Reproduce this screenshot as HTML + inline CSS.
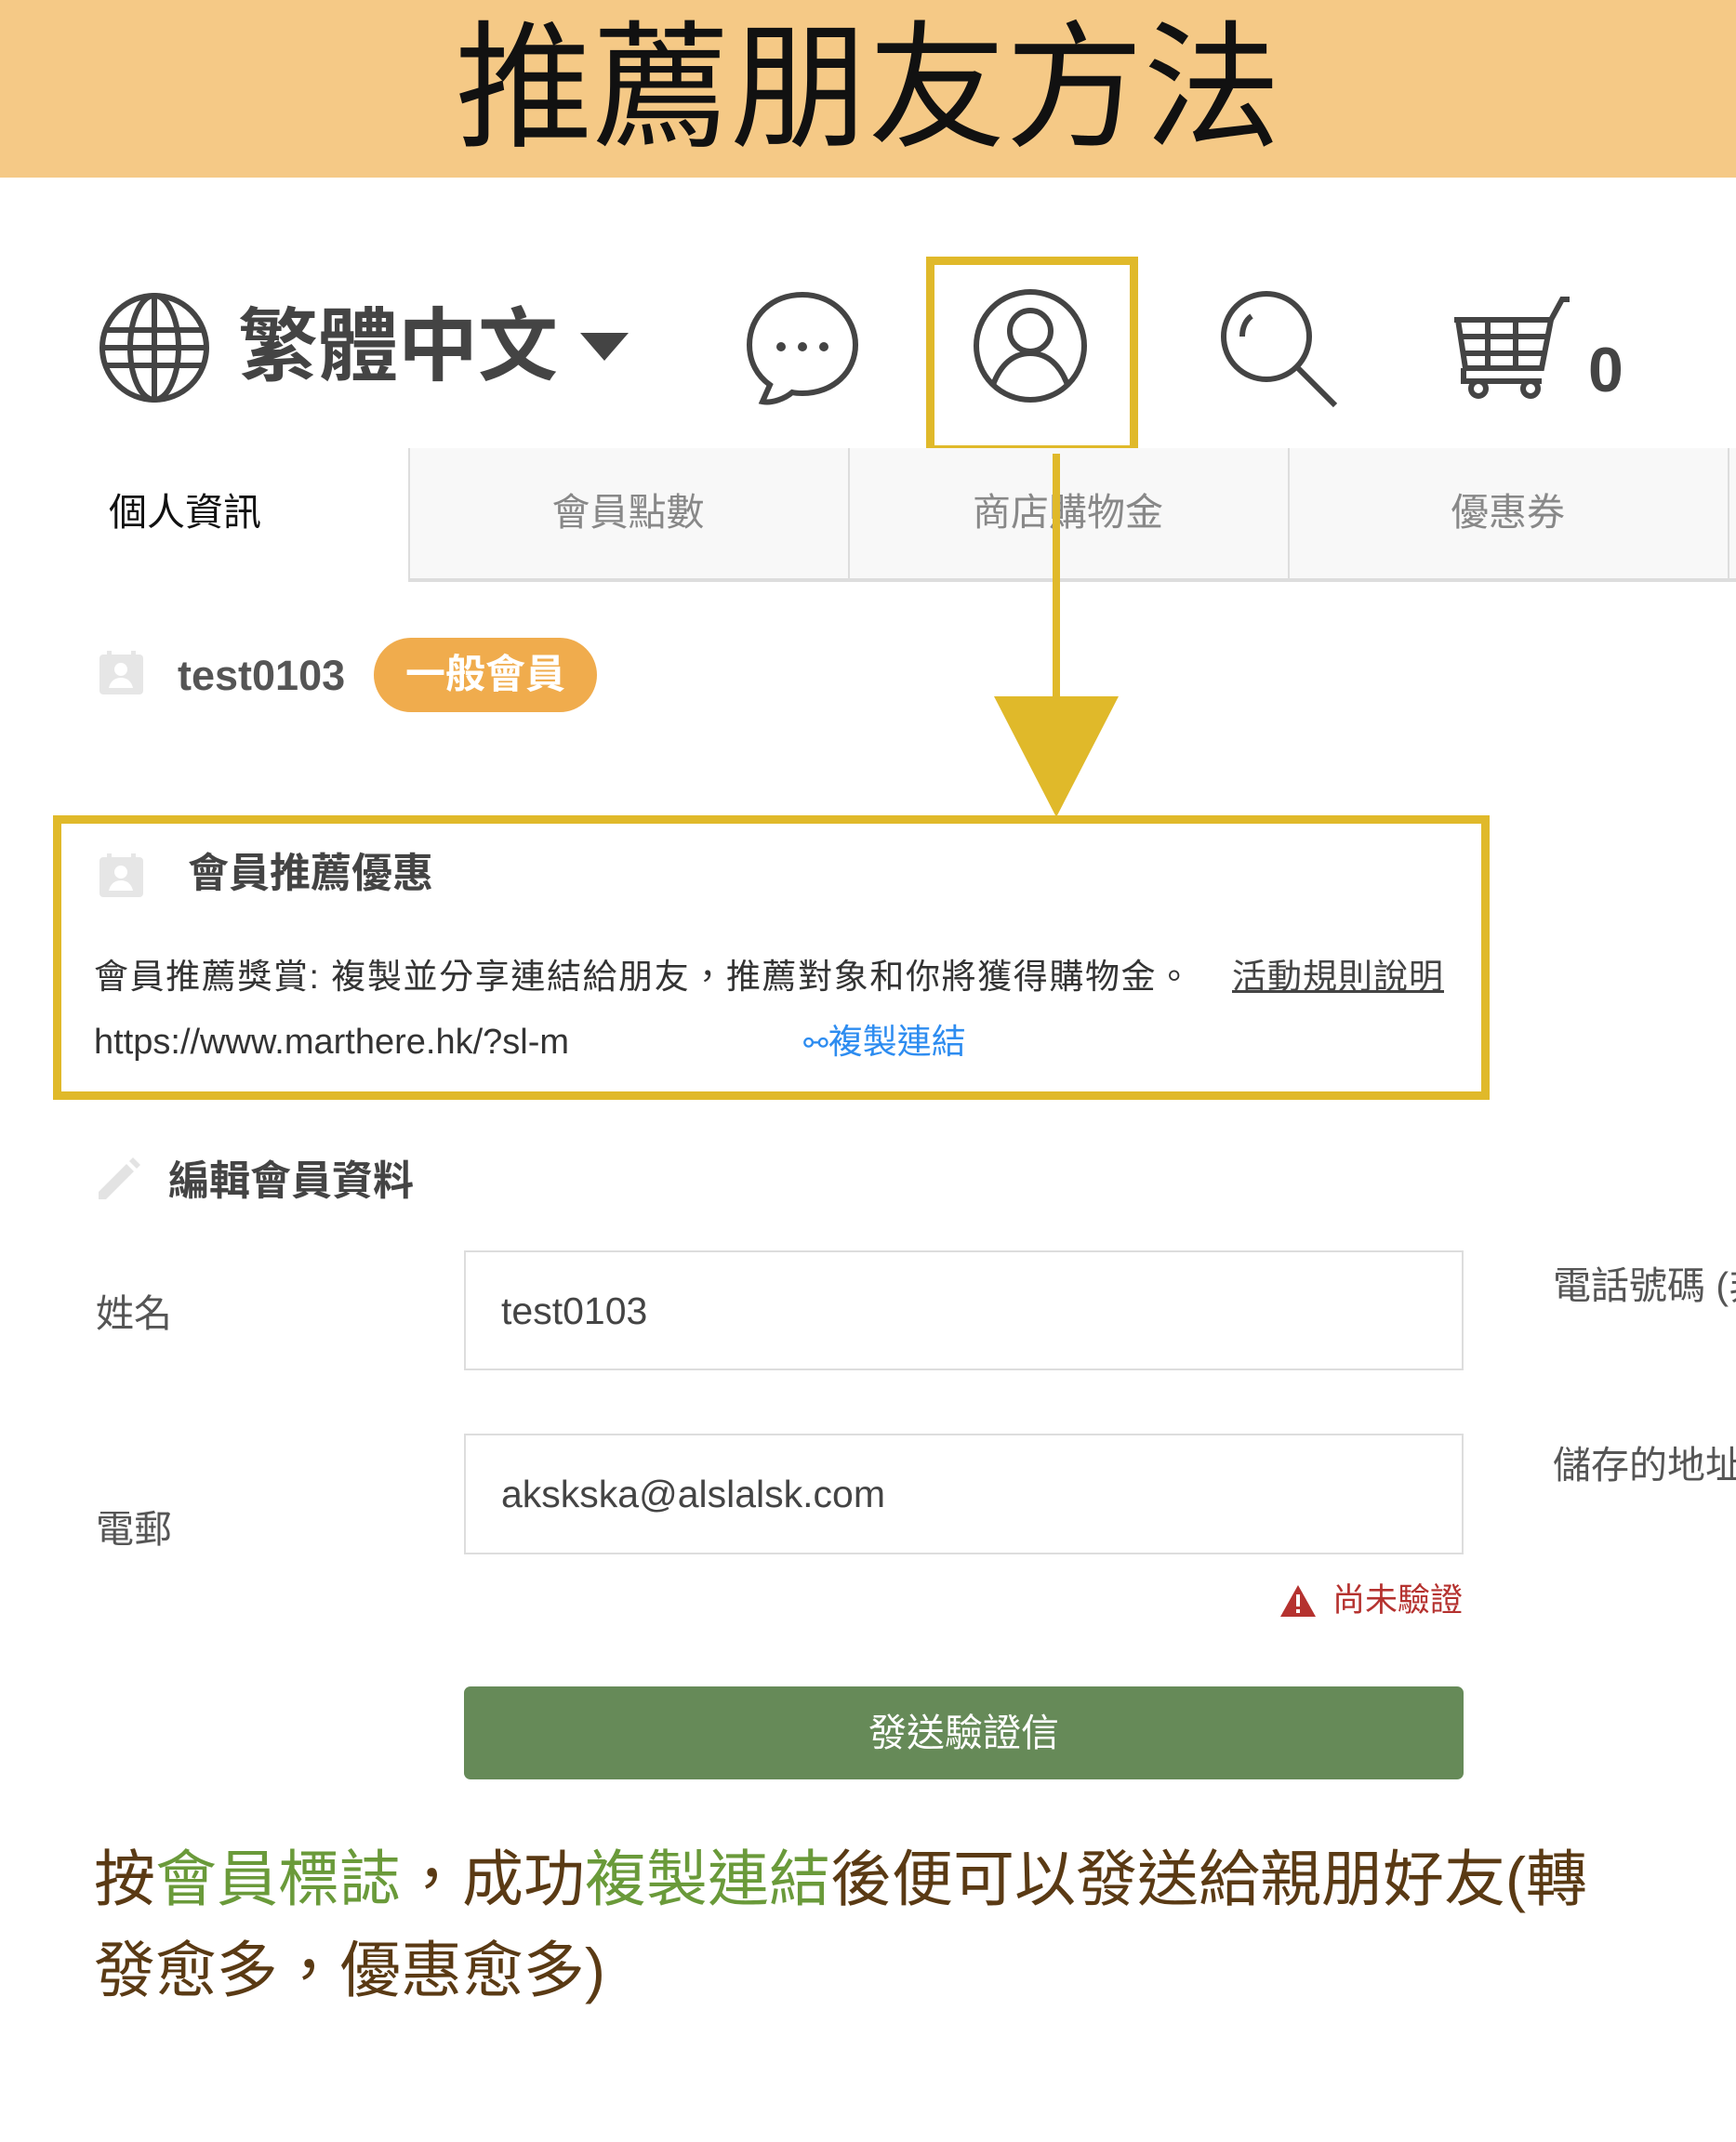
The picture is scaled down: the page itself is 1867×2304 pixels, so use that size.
<!DOCTYPE html>
<html><head><meta charset="utf-8">
<style>
*{margin:0;padding:0;box-sizing:border-box}
body{width:1867px;height:2304px;background:#fff;position:relative;overflow:hidden;font-family:"Liberation Sans","Noto Sans CJK TC",sans-serif;color:#333}
.a{position:absolute;white-space:nowrap}
.cj{font-family:"Liberation Sans","Noto Sans CJK TC",sans-serif}
</style></head><body>
<div class="a" style="left:0;top:0;width:1867px;height:191px;background:#f5c986"></div>
<div class="a cj" style="left:0;top:8px;width:1867px;text-align:center;font-size:148px;line-height:175px;color:#111;font-weight:400">推薦朋友方法</div>

<svg class="a" style="left:106px;top:313px" width="121" height="123" viewBox="0 0 121 123" fill="none" stroke="#444" stroke-width="6">
<circle cx="60" cy="61" r="56"/><ellipse cx="60" cy="61" rx="26" ry="56"/><line x1="60" y1="5" x2="60" y2="117"/><line x1="6" y1="42" x2="114" y2="42"/><line x1="6" y1="80" x2="114" y2="80"/><line x1="4" y1="61" x2="116" y2="61"/></svg>
<div class="a cj" style="left:256px;top:318px;font-size:86px;line-height:110px;color:#444;font-weight:700">繁體中文</div>
<svg class="a" style="left:624px;top:358px" width="52" height="32"><polygon points="0,0 52,0 26,30" fill="#444"/></svg>
<svg class="a" style="left:800px;top:311px" width="126" height="126" viewBox="0 0 126 126" fill="none" stroke="#444" stroke-width="6">
<path d="M63 6C30 6 6 29 6 60c0 18 8 33 22 43l-8 18c10 2 24-3 32-10 4 1 7 1 11 1 33 0 57-23 57-52S96 6 63 6z"/>
<circle cx="40" cy="62" r="5" fill="#444" stroke="none"/><circle cx="63" cy="62" r="5" fill="#444" stroke="none"/><circle cx="86" cy="62" r="5" fill="#444" stroke="none"/></svg>
<div class="a" style="left:996px;top:276px;width:228px;height:212px;border:9px solid #e0b92a"></div>
<svg class="a" style="left:1046px;top:310px" width="124" height="124" viewBox="0 0 124 124" fill="none" stroke="#444" stroke-width="6">
<circle cx="62" cy="62" r="58"/><circle cx="62" cy="46" r="22"/><path d="M22 104c8-22 22-34 40-34s32 12 40 34"/></svg>
<svg class="a" style="left:1310px;top:310px" width="130" height="130" viewBox="0 0 130 130" fill="none" stroke="#444" stroke-width="6">
<circle cx="52" cy="52" r="46"/><line x1="86" y1="86" x2="126" y2="126"/><path d="M26 52c0-10 4-18 10-22"/></svg>
<svg class="a" style="left:1560px;top:318px" width="130" height="112" viewBox="0 0 130 112" fill="none" stroke="#444" stroke-width="6">
<path d="M4 26h104l12-22h8"/><path d="M108 26l-10 52H16L8 26"/><line x1="10" y1="44" x2="104" y2="44"/><line x1="12" y1="62" x2="100" y2="62"/><line x1="40" y1="26" x2="40" y2="78"/><line x1="70" y1="26" x2="70" y2="78"/><path d="M14 78v14h84"/><circle cx="30" cy="100" r="8"/><circle cx="86" cy="100" r="8"/></svg>
<div class="a" style="left:1708px;top:360px;font-size:68px;line-height:76px;font-weight:700;color:#444">0</div>

<div class="a cj" style="left:117px;top:526px;font-size:41px;line-height:50px;color:#111">個人資訊</div>
<div class="a" style="left:439px;top:482px;width:1428px;height:144px;background:#f8f8f8;border-left:2px solid #ddd;border-bottom:4px solid #ddd"></div>
<div class="a" style="left:912px;top:482px;width:2px;height:142px;background:#ddd"></div>
<div class="a" style="left:1385px;top:482px;width:2px;height:142px;background:#ddd"></div>
<div class="a" style="left:1858px;top:482px;width:2px;height:142px;background:#ddd"></div>
<div class="a cj" style="left:439px;width:473px;text-align:center;top:526px;font-size:41px;line-height:50px;color:#888">會員點數</div>
<div class="a cj" style="left:912px;width:473px;text-align:center;top:526px;font-size:41px;line-height:50px;color:#888">商店購物金</div>
<div class="a cj" style="left:1385px;width:473px;text-align:center;top:526px;font-size:41px;line-height:50px;color:#888">優惠券</div>

<div class="a" style="left:1132px;top:488px;width:8px;height:265px;background:#e0b92a"></div>
<svg class="a" style="left:1069px;top:749px" width="134" height="130"><polygon points="0,0 134,0 67,130" fill="#e0b92a"/></svg>

<svg class="a" style="left:107px;top:700px" width="47" height="47" viewBox="0 0 47 47"><rect x="0" y="4" width="47" height="43" rx="4" fill="#e6e6e6"/><rect x="8" y="0" width="5" height="8" fill="#e6e6e6"/><rect x="34" y="0" width="5" height="8" fill="#e6e6e6"/><circle cx="23" cy="20" r="7" fill="#fff"/><path d="M10 40c2-8 7-11 13-11s11 3 13 11z" fill="#fff"/></svg>
<div class="a" style="left:191px;top:700px;font-size:45px;line-height:54px;font-weight:700;color:#555">test0103</div>
<div class="a cj" style="left:402px;top:686px;width:240px;height:80px;border-radius:40px;background:#f0ac4d;color:#fff;font-size:43px;line-height:80px;text-align:center;font-weight:700">一般會員</div>

<div class="a" style="left:57px;top:877px;width:1545px;height:306px;border:9px solid #e0b92a"></div>
<svg class="a" style="left:107px;top:918px" width="47" height="47" viewBox="0 0 47 47"><rect x="0" y="4" width="47" height="43" rx="4" fill="#e6e6e6"/><rect x="8" y="0" width="5" height="8" fill="#e6e6e6"/><rect x="34" y="0" width="5" height="8" fill="#e6e6e6"/><circle cx="23" cy="20" r="7" fill="#fff"/><path d="M10 40c2-8 7-11 13-11s11 3 13 11z" fill="#fff"/></svg>
<div class="a cj" style="left:202px;top:912px;font-size:44px;line-height:56px;font-weight:700;color:#444">會員推薦優惠</div>
<div class="a cj" style="left:101px;top:1028px;font-size:37px;line-height:46px;color:#333;letter-spacing:1.6px">會員推薦獎賞: 複製並分享連結給朋友，推薦對象和你將獲得購物金。</div>
<div class="a cj" style="left:1325px;top:1028px;font-size:37px;line-height:46px;color:#444;text-decoration:underline;letter-spacing:1px">活動規則說明</div>
<div class="a" style="left:101px;top:1098px;font-size:38px;line-height:46px;color:#333;width:546px;overflow:hidden">https://www.marthere.hk/?sl-m</div>
<div class="a cj" style="left:864px;top:1098px;font-size:37px;line-height:46px;color:#2d8cf0"><span style="font-size:32px">⚯</span>複製連結</div>

<svg class="a" style="left:100px;top:1244px" width="52" height="52" viewBox="0 0 52 52"><path d="M6 38L36 8l8 8-30 30H6z" fill="#e3e3e3"/><path d="M39 5l4-4 8 8-4 4z" fill="#e3e3e3"/></svg>
<div class="a cj" style="left:181px;top:1243px;font-size:44px;line-height:56px;font-weight:700;color:#444">編輯會員資料</div>

<div class="a cj" style="left:103px;top:1388px;font-size:41px;line-height:50px;color:#555">姓名</div>
<div class="a" style="left:499px;top:1345px;width:1075px;height:129px;border:2px solid #ddd"></div>
<div class="a" style="left:539px;top:1385px;font-size:41px;line-height:50px;color:#444">test0103</div>
<div class="a cj" style="left:1670px;top:1358px;font-size:41px;line-height:50px;color:#555">電話號碼 (非</div>

<div class="a cj" style="left:103px;top:1620px;font-size:41px;line-height:50px;color:#555">電郵</div>
<div class="a" style="left:499px;top:1542px;width:1075px;height:130px;border:2px solid #ddd"></div>
<div class="a" style="left:539px;top:1582px;font-size:41px;line-height:50px;color:#444">akskska@alslalsk.com</div>
<div class="a cj" style="left:1670px;top:1551px;font-size:41px;line-height:50px;color:#555">儲存的地址</div>

<svg class="a" style="left:1377px;top:1705px" width="38" height="34" viewBox="0 0 38 34"><polygon points="19,0 38,34 0,34" fill="#b5322f"/><rect x="17" y="10" width="4" height="13" fill="#fff"/><rect x="17" y="26" width="4" height="4" fill="#fff"/></svg>
<div class="a cj" style="left:1433px;top:1700px;font-size:35px;line-height:44px;color:#b5322f">尚未驗證</div>

<div class="a cj" style="left:499px;top:1814px;width:1075px;height:100px;background:#668a58;border-radius:7px;color:#fff;font-size:41px;line-height:100px;text-align:center">發送驗證信</div>

<div class="a cj" style="left:101px;top:1972px;font-size:66px;line-height:98px;color:#5a3a14;white-space:normal;width:1760px">按<span style="color:#6a9a3a">會員標誌</span>，成功<span style="color:#6a9a3a">複製連結</span>後便可以發送給親朋好友(轉<br>發愈多，優惠愈多)</div>
</body></html>
